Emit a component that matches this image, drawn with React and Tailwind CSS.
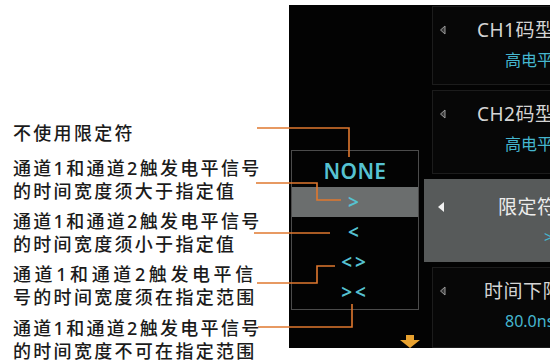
import React from "react";

const NOTES = [
  { lines: ["不使用限定符"], mt: "mt-0" },
  { lines: ["通道1和通道2触发电平信号", "的时间宽度须大于指定值"], mt: "mt-[12px]" },
  { lines: ["通道1和通道2触发电平信号", "的时间宽度须小于指定值"], mt: "mt-[7px]" },
  { lines: ["通道1和通道2触发电平信", "号的时间宽度须在指定范围"], mt: "mt-[7px]", wide: true },
  { lines: ["通道1和通道2触发电平信号", "的时间宽度不可在指定范围"], mt: "mt-[8px]" },
];

const OPTIONS = ["NONE", ">", "<", "<>", "><"];

const LEADERS = [
  "257,128 349,128 349,157",
  "256,183 317,183 317,200 341,200",
  "254,233 330,233",
  "257,283 317,283 317,266 335,266",
  "258,327 352,327 352,304",
];

function Tri({ active }) {
  return active ? (
    <svg width="8" height="12" viewBox="0 0 8 12" className="shrink-0">
      <path d="M7 1 L1 6 L7 11 Z" fill="#f2f2f2" />
    </svg>
  ) : (
    <svg width="7" height="10" viewBox="0 0 7 10" className="shrink-0">
      <path d="M6 1 L1.5 5 L6 9 Z" fill="#3a3a3a" stroke="#9a9a9a" strokeWidth="1" />
    </svg>
  );
}

function Card({ title, value, h, active, titleX, valueX }) {
  return (
    <div
      className={`relative flex flex-col overflow-hidden whitespace-nowrap ${h} ${
        active ? "bg-[#575a5a]" : "ml-2 border border-[#1c1c1c] bg-[#070707]"
      }`}
    >
      <div className={`flex items-center ${active ? "mt-[17px] pl-[13px]" : "mt-[12px] pl-[6px]"}`}>
        <Tri active={active} />
        <span
          className={`${titleX} text-[19px] leading-[22px] ${active ? "text-[#ececec]" : "text-[#d4d4d4]"} tracking-[0.5px]`}
        >
          {title}
        </span>
      </div>
      <span className={`${valueX} mt-[9px] text-[16px] leading-[20px] text-[#45b6cf]`}>{value}</span>
    </div>
  );
}

export default function App() {
  return (
    <div
      className="relative flex h-[364px] w-[550px] overflow-hidden bg-white"
      style={{ fontFamily: '"Noto Sans", "Noto Sans CJK SC", sans-serif' }}
    >
      {/* annotations */}
      <div className="flex w-[289px] shrink-0 flex-col pl-[13px] pt-[122px] text-[18px] font-medium leading-[23px] text-[#1b1b1b]">
        {NOTES.map((n, i) => (
          <div key={i} className={n.mt}>
            {n.lines.map((l, j) => (
              <div
                key={j}
                className={`whitespace-nowrap ${n.wide && j === 0 ? "tracking-[3.6px]" : "tracking-[2.3px]"}`}
              >
                {l}
              </div>
            ))}
          </div>
        ))}
      </div>

      {/* scope panel */}
      <div className="mt-[5px] flex h-[343px] flex-1 bg-[#030303]">
        <div className="flex w-[135px] shrink-0 flex-col pl-[2px]">
          <div className="mt-[145px] flex h-[162px] w-[128px] flex-col border border-[#4b4b4b] pt-[6px]">
            {OPTIONS.map((o, i) => (
              <div
                key={o}
                className={`flex h-[30px] items-center justify-center font-semibold text-[#56c2d2] ${
                  i === 1 ? "bg-[#6b6e6e]" : ""
                } ${i === 0 ? "text-[21px] tracking-[0.3px]" : "text-[19px] tracking-[3px]"}`}
              >
                {o}
              </div>
            ))}
          </div>
          <div className="mt-[25px] flex justify-end pr-[3px]">
            <svg width="22" height="13" viewBox="0 0 22 13">
              <path d="M7 0 H15 V5 H21 L11 13 L1 5 H7 Z" fill="#e8a12f" />
            </svg>
          </div>
        </div>
        <div className="flex flex-1 flex-col gap-[5px] pt-[1px]">
          <Card title="CH1码型" value="高电平" h="h-[79px]" titleX="ml-[31px]" valueX="ml-[72px]" />
          <Card title="CH2码型" value="高电平" h="h-[84px]" titleX="ml-[31px]" valueX="ml-[72px]" />
          <Card title="限定符" value=">" active h="h-[84px]" titleX="ml-[53px]" valueX="ml-[120px]" />
          <Card title="时间下限" value="80.0ns" h="h-[81px]" titleX="ml-[38px]" valueX="ml-[72px]" />
        </div>
      </div>

      {/* leader lines */}
      <svg className="pointer-events-none absolute left-0 top-0" width="550" height="364">
        {LEADERS.map((p, i) => (
          <polyline key={i} points={p} fill="none" stroke="#e0782f" strokeWidth="1.6" />
        ))}
      </svg>
    </div>
  );
}
